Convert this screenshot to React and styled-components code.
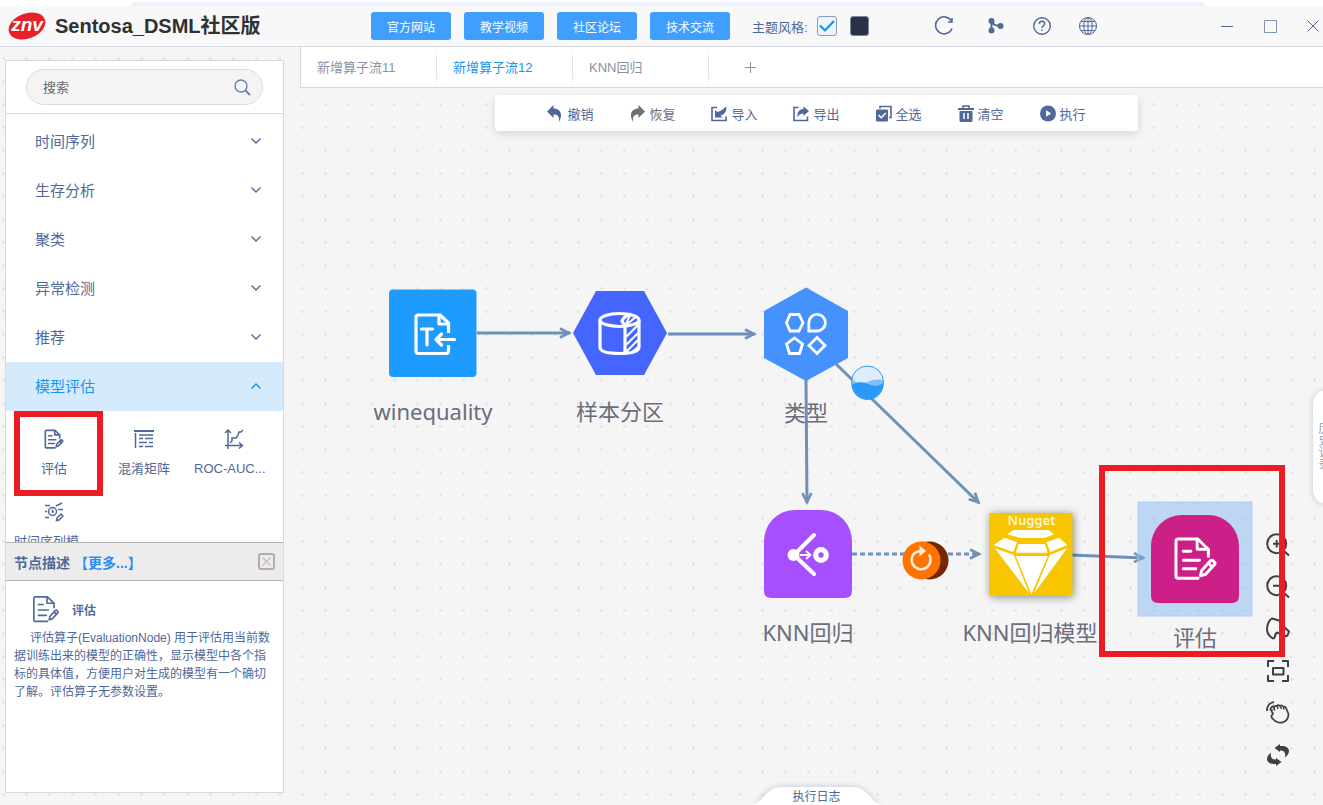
import React, { useState } from 'react';
import styled, { createGlobalStyle, css } from 'styled-components';

const colors = {
  primary: '#409eff',
  active: '#1296f5',
  ink: '#4f6899',
  muted: '#8a91a5',
  line: '#d6d9e4',
  canvas: '#f5f5f5',
  edge: '#6f90b8',
  danger: '#ed1c24',
};

const categories = ['时间序列', '生存分析', '聚类', '异常检测', '推荐', '模型评估'];

const flows = ['新增算子流11', '新增算子流12', 'KNN回归'];

const links = ['官方网站', '教学视频', '社区论坛', '技术交流'];

/* ---------- icons ---------- */

const EvaluateIcon = ({ weight = 8, ...rest }) => (
  <svg
    viewBox="640 258 136 136"
    fill="none"
    stroke="currentColor"
    strokeWidth={weight}
    strokeLinejoin="round"
    strokeLinecap="round"
    {...rest}
  >
    <path d="M747 320V299L715 267H656Q649 267 649 274V379Q649 386 656 386H716" />
    <path d="M713 268V298H746" />
    <path d="M671 304H694M671 331H720M671 357H709" />
    <path d="M723 378L727 362L753 333Q758 330 762 334L765 337Q769 341 765 345L738 374Z" />
    <path d="M748 341L758 351" />
  </svg>
);

const MatrixIcon = (props) => (
  <svg viewBox="0 0 20 18" fill="none" stroke="currentColor" strokeWidth="1.5" {...props}>
    <path d="M0 1H20" strokeWidth="2" />
    <path d="M1.5 3V18M5 5H19" />
    <path d="M5 8.5H9M11 8.5H19M5 12.5H13M15 12.5H19M5 16.5H9M11 16.5H19" />
  </svg>
);

const RocIcon = (props) => (
  <svg viewBox="0 0 20 20" fill="none" stroke="currentColor" strokeWidth="1.5" {...props}>
    <path d="M4 1V20M1 4L4 1L7 4M1 16.5H18M15 13.5L18.5 16.5L15 19.5" />
    <path d="M6 14L8 12V9H12L14 6L15 3H17L19 1" />
  </svg>
);

const SeriesIcon = (props) => (
  <svg viewBox="0 0 20 20" fill="none" stroke="currentColor" strokeWidth="1.5" {...props}>
    <circle cx="8.5" cy="9.5" r="4" />
    <path d="M8.5 7.5V10H10M1 3.5H6M1 9.5H3M1 15.5H5M12 4L18 1M14 7.5H19" />
    <path d="M12.5 18.5L13 16L17 12L19 14L15 18Z" />
  </svg>
);

const UndoIcon = (props) => (
  <svg viewBox="0 0 16 17" fill="currentColor" {...props}>
    <path d="M0 6.5L6.5 0V3.5C13 3.5 16.500 9 12 17C12.500 11.500 11 9.500 6.500 9.500V13Z" />
  </svg>
);

const RedoIcon = (props) => (
  <svg viewBox="0 0 16 17" fill="currentColor" {...props}>
    <path d="M16 6.500L9.500 0V3.500C3 3.500 -.500 9 4 17C3.500 11.500 5 9.500 9.500 9.500V13Z" />
  </svg>
);

const ImportIcon = (props) => (
  <svg viewBox="0 0 16 16" {...props}>
    <path d="M6 2H1V15H15V11" fill="none" stroke="currentColor" strokeWidth="1.6" />
    <path d="M4 12V4.500L6.200 6.500C10 6 12 3.500 15.500 1C15.500 6 13.500 9 9.500 10L11.500 12Z" fill="currentColor" />
  </svg>
);

const ExportIcon = (props) => (
  <svg viewBox="0 0 16 16" {...props}>
    <path d="M5.500 2H1V15H14.500V11" fill="none" stroke="currentColor" strokeWidth="1.600" />
    <path d="M16 5.500L10.500 1V3.500C6 3.500 4 7 4.500 12C6 9 7.500 8 10.500 8V10.500Z" fill="currentColor" />
  </svg>
);

const SelectAllIcon = (props) => (
  <svg viewBox="0 0 16 16" {...props}>
    <path d="M4 3V1H15V12H13" fill="none" stroke="currentColor" strokeWidth="1.600" />
    <rect x="0" y="4" width="12" height="12" rx="1" fill="currentColor" />
    <path d="M2.500 9.500L5.200 12.200L9.800 7.500" fill="none" stroke="#fff" strokeWidth="1.600" />
  </svg>
);

const TrashIcon = (props) => (
  <svg viewBox="0 0 16 17" {...props}>
    <path d="M5 3V1H11V3" fill="none" stroke="currentColor" strokeWidth="1.500" />
    <path d="M0 3H16V5H0ZM1.500 6H14.500V15.500Q14.500 17 13 17H3Q1.500 17 1.500 15.500Z" fill="currentColor" />
    <path d="M6 8V14M10 8V14" stroke="#fff" strokeWidth="1.500" />
  </svg>
);

const RunIcon = (props) => (
  <svg viewBox="0 0 17 17" {...props}>
    <circle cx="8.500" cy="8.500" r="8.500" fill="currentColor" />
    <path d="M6.500 5L12 8.500L6.500 12Z" fill="#fff" />
  </svg>
);

const actions = [
  { name: '撤销', Icon: UndoIcon },
  { name: '恢复', Icon: RedoIcon, disabled: true },
  { name: '导入', Icon: ImportIcon },
  { name: '导出', Icon: ExportIcon },
  { name: '全选', Icon: SelectAllIcon },
  { name: '清空', Icon: TrashIcon },
  { name: '执行', Icon: RunIcon },
];

const operators = [
  { name: '评估', Icon: EvaluateIcon, weight: 11 },
  { name: '混淆矩阵', Icon: MatrixIcon },
  { name: 'ROC-AUC...', Icon: RocIcon, long: true },
  { name: '时间序列模...', Icon: SeriesIcon, long: true },
];

const RefreshIcon = () => (
  <svg width="20" height="20" viewBox="0 0 20 20" fill="none" stroke="currentColor" strokeWidth="1.500">
    <path d="M17.500 5.200A8.500 8.500 0 1 0 18 12.500" />
    <path d="M14 6H18V2" />
  </svg>
);

const BranchIcon = () => (
  <svg width="18" height="18" viewBox="0 0 18 18" fill="currentColor">
    <path d="M4.500 4V14M4.500 4Q6 9 14 9" fill="none" stroke="currentColor" strokeWidth="2" />
    <circle cx="4.500" cy="4" r="3" />
    <circle cx="4.500" cy="13.500" r="3" />
    <circle cx="13.500" cy="9" r="3" />
  </svg>
);

const HelpIcon = () => (
  <svg width="20" height="20" viewBox="0 0 20 20" fill="none" stroke="currentColor" strokeWidth="1.400">
    <circle cx="10" cy="10" r="8.300" />
    <path d="M7.300 8Q7.300 5.300 10 5.300Q12.700 5.300 12.700 7.700Q12.700 9 11.200 9.800Q10 10.500 10 12" />
    <path d="M10 13.500V15" />
  </svg>
);

const GlobeIcon = () => (
  <svg width="20" height="20" viewBox="0 0 20 20" fill="none" stroke="currentColor" strokeWidth="1">
    <circle cx="10" cy="10" r="8.500" />
    <ellipse cx="10" cy="10" rx="4.200" ry="8.500" />
    <path d="M10 1.500V18.500M1.500 10H18.500M3 5.500H17M3 14.500H17" />
  </svg>
);

const canvasTools = [
  {
    name: '放大',
    draw: <path d="M20.200 10.700A9.500 9.500 0 1 1 1.200 10.700A9.500 9.500 0 1 1 20.200 10.700ZM17.500 17.500L23 22.500M10.700 7V14.500M7 10.700H14.500" />,
  },
  {
    name: '缩小',
    draw: <path d="M20.200 10.700A9.500 9.500 0 1 1 1.200 10.700A9.500 9.500 0 1 1 20.200 10.700ZM17.500 17.500L23 22.500M7 10.700H14.500" />,
  },
  {
    name: '指针',
    draw: <path d="M6 1.500L13 3.500Q15.500 4.500 16.500 6.500L18 10L23 14.500L21.500 18.500Q17 20.500 14 17L11.500 15.500Q9 16.500 9 19.500Q8.500 21.500 7 21.500Q1 18 1 12Q1.500 4 6 1.500Z" />,
  },
  {
    name: '适应画布',
    draw: <path d="M2 8V2H8M16 2H22V8M22 16V22H16M8 22H2V16M7 9H17.500V15.500H7Z" />,
  },
  {
    name: '拖动',
    draw: (
      <>
        <path d="M1 10Q1 2 8 1.200M4.500 9.500Q4 5.500 8 5.500" strokeWidth="1.800" />
        <path d="M6.500 8.500Q4.500 10 7 12.500L6 14Q4.500 16 7 18Q11 22.500 16.500 21.500Q22.500 19.500 22.500 13L20 7Q19 5 17.500 6Q16 3.500 14 5Q12 3.500 11 5Q7.500 4 8 8" strokeWidth="1.800" />
        <path d="M8 8L9 9.500M11 5.500L12 8M14.500 5.500L15.500 8M17.500 6.500L18 8.500" strokeWidth="1.500" />
      </>
    ),
  },
  {
    name: '旋转',
    draw: (
      <>
        <path d="M14 1L8.500 5L14 9V7.500C18 7 20 9.500 19 14.500C26 9 23.500 2 14 3Z" fill="currentColor" stroke="none" />
        <path d="M10 23L15.500 19L10 15V16.500C6 17 4 14.500 5 9.500C-2 15 .500 22 10 21Z" fill="currentColor" stroke="none" />
      </>
    ),
  },
];

/* ---------- flow nodes, drawn around their own centre ---------- */

const archPath = 'M-44 37V-13A31 31 0 0 1 -13 -44H13A31 31 0 0 1 44 -13V37Q44 44 37 44H-37Q-44 44 -44 37Z';

const DataShape = () => (
  <>
    <rect x="-43.500" y="-43.500" width="87.500" height="87.500" rx="4" fill="#1e9bff" />
    <g fill="none" stroke="#fff" strokeWidth="3.200" strokeLinejoin="round">
      <path d="M16 0V-10L7.500 -18H-14Q-16.500 -18 -16.500 -16V18Q-16.500 20.500 -14 20.500H13.500Q16 20.500 16 18V12" />
      <path d="M6.500 -17V-9H15" />
      <path d="M-11 -4H0M-5.500 -4V12M4 6.500H22M9 1L3.500 6.500L9 12" strokeLinecap="round" />
    </g>
  </>
);

const SampleShape = () => (
  <>
    <path d="M-47 0L-24 -42H24L47 0L24 42H-24Z" fill="#4466ff" />
    <g fill="none" stroke="#fff" strokeWidth="3.200">
      <ellipse cx="-.500" cy="-13" rx="19.500" ry="6.500" />
      <path d="M-20 -13V14Q-20 20.500 -.500 20.500Q19 20.500 19 14V-13" />
      <path d="M5 20V-7L2 -12Q4 -17 11 -19" />
      <path d="M6 -8L17 -17M6 -9L10 -18M6 4L18 -8M6 12L18 0M6 19L18 7M12 19L18 14" strokeWidth="2" />
    </g>
  </>
);

const TypeShape = () => (
  <>
    <path d="M0 -46.500L42 -23V24L0 47L-42 24V-23Z" fill="#4592ff" />
    <g fill="none" stroke="#fff" strokeWidth="2.800">
      <path d="M-16 -19.500H-7L-3 -11.300L-7 -3H-16L-19.500 -11.300Z" />
      <path d="M2.800 -3V-11A8.300 8.300 0 1 1 11 -3Z" />
      <path d="M-11.500 4L-3.500 10L-6.500 19.500H-16.500L-19.500 10Z" />
      <path d="M11 3.500L19 11.500L11 19.500L3 11.500Z" />
    </g>
  </>
);

const KnnShape = () => (
  <>
    <path d={archPath} fill="#a64fff" />
    <g fill="none" stroke="#fff">
      <circle cx="-14.500" cy="1" r="6" fill="#fff" stroke="none" />
      <path d="M-13 0L6 -19M-13 2L6 20" strokeWidth="4" strokeLinecap="round" />
      <circle cx="13" cy="1" r="5.300" strokeWidth="5.200" />
      <path d="M-8 1H2M-2 -3L2.500 1L-2 5" strokeWidth="1.800" />
    </g>
  </>
);

const NuggetShape = () => (
  <>
    <rect x="-41" y="-41" width="83" height="83" fill="#f8c600" />
    <text x="1" y="-29" textAnchor="middle" fontSize="13" fontWeight="600" fill="#fff6d2">
      Nugget
    </text>
    <path
      transform="translate(-70 -104) scale(.3333)"
      fill="#fff"
      d="M160 240H265L281 253L253 264H180L140 253ZM132 263L170 277L158 306L99 285ZM175 282H253L262 308H166ZM296 263L258 277L270 306L320 285ZM103 295L160 315L206 430ZM166 318H262L213 433ZM320 295L268 315L221 430Z"
    />
  </>
);

const EvaluateShape = () => (
  <>
    <rect x="-57" y="-57" width="114" height="114" fill="#7ab2ef" fillOpacity=".45" stroke="#a9cbfb" />
    <path d={archPath} fill="#cd1f88" />
    <g color="#fff">
      <EvaluateIcon x="-22" y="-23" width="45" height="45" weight="9" />
    </g>
  </>
);

const nodes = [
  { name: 'winequality', x: 133, y: 245, Shape: DataShape },
  { name: '样本分区', x: 320, y: 245, Shape: SampleShape },
  { name: '类型', x: 506, y: 246, Shape: TypeShape },
  { name: 'KNN回归', x: 508, y: 466, Shape: KnnShape },
  { name: 'KNN回归模型', x: 730, y: 466, Shape: NuggetShape, shadow: true },
  { name: '评估', x: 895, y: 471, Shape: EvaluateShape },
];

const edges = [
  { from: [177, 245], to: [270, 245] },
  { from: [368, 246], to: [455, 246] },
  { from: [506, 292], to: [507, 415] },
  { from: [536, 276], to: [679, 415] },
  { from: [552, 466], to: [680, 466], dashed: true },
  { from: [771, 467], to: [844, 470] },
];

const Edges = () => (
  <EdgeLayer aria-hidden="true">
    <defs>
      <marker id="arrow" viewBox="-13 -7 15 14" markerWidth="15" markerHeight="14" markerUnits="userSpaceOnUse" refX="0" refY="0" orient="auto">
        <path d="M-10 -4.500L-1 0L-10 4.500" fill="none" stroke={colors.edge} strokeWidth="2.600" />
      </marker>
    </defs>
    {edges.map(({ from, to, dashed }) => (
      <path
        key={from.join()}
        d={`M${from.join(' ')}L${to.join(' ')}`}
        stroke={colors.edge}
        strokeWidth="3"
        strokeDasharray={dashed ? '5 3' : undefined}
        markerEnd="url(#arrow)"
      />
    ))}
  </EdgeLayer>
);

const ProgressBadge = () => (
  <Badge $x={550} $y={277} width="35" height="35" viewBox="0 0 35 35" aria-label="进度">
    <circle cx="17.500" cy="17" r="16" fill="#d9ebfa" fillOpacity=".85" />
    <path d="M1.500 15Q8 19 17 17Q27 13 33.500 15.500L33 21A16 16 0 0 1 2 21Z" fill="#7fc2fa" />
    <path d="M1.500 20Q9 15 17.500 19Q27 23 33.500 18A16 16 0 0 1 1.500 20Z" fill="#2196f8" fillOpacity=".9" />
    <circle cx="17.500" cy="17" r="16" fill="none" stroke="#2a9df8" />
  </Badge>
);

const RetryBadge = () => (
  <Badge $x={602} $y={453} width="47" height="40" viewBox="0 0 47 40" aria-label="重新训练">
    <circle cx="27.500" cy="19.500" r="19" fill="#722700" />
    <circle cx="19.500" cy="19.500" r="19" fill="#ff7300" />
    <path d="M27 13.500A9.500 9.500 0 1 1 12 12.500Q15 10 19 10" fill="none" stroke="#ffeede" strokeWidth="2.600" />
    <path d="M17.500 4.500L24 10L17.500 15.500Z" fill="#ffeede" />
  </Badge>
);

const Chevron = ({ up }) => (
  <svg width="10" height="6" viewBox="0 0 10 6" fill="none" stroke="currentColor" strokeWidth="1.300">
    <path d={up ? 'M.500 5.500L5 1L9.500 5.500' : 'M.500 .500L5 5L9.500 .500'} />
  </svg>
);

const TopBar = () => (
  <Header>
    <Brand>
      <svg width="38" height="30" viewBox="0 0 38 30" aria-label="znv">
        <ellipse cx="19" cy="15" rx="19" ry="12.500" transform="rotate(-20 19 15)" fill="#e8202a" />
        <text x="19" y="20" textAnchor="middle" fontSize="19" fontWeight="700" fontStyle="italic" fill="#fff">
          znv
        </text>
      </svg>
      <h1>Sentosa_DSML社区版</h1>
    </Brand>
    <LinkGroup>
      {links.map((name) => (
        <LinkButton key={name}>{name}</LinkButton>
      ))}
    </LinkGroup>
    <ThemeGroup>
      <label htmlFor="light-theme">主题风格:</label>
      <Tick>
        <input id="light-theme" type="checkbox" defaultChecked />
        <svg width="16" height="14" viewBox="0 0 16 14" fill="none" stroke="#1296f5" strokeWidth="2.200">
          <path d="M1 6.500L6 11.500L15 2" />
        </svg>
      </Tick>
      <DarkSwatch aria-label="深色主题" />
    </ThemeGroup>
    <IconButton aria-label="刷新"><RefreshIcon /></IconButton>
    <IconGroup>
      <IconButton aria-label="分支"><BranchIcon /></IconButton>
      <IconButton aria-label="帮助"><HelpIcon /></IconButton>
      <IconButton aria-label="语言"><GlobeIcon /></IconButton>
    </IconGroup>
    <WindowControls>
      <IconButton aria-label="最小化">
        <svg width="12" height="12" viewBox="0 0 12 12" stroke="currentColor"><path d="M0 6.500H12" /></svg>
      </IconButton>
      <IconButton aria-label="最大化">
        <svg width="13" height="13" viewBox="0 0 13 13" fill="none" stroke="#7f93b8"><path d="M.500 .500H12.500V12.500H.500Z" /></svg>
      </IconButton>
      <IconButton aria-label="关闭">
        <svg width="12" height="12" viewBox="0 0 12 12" stroke="currentColor"><path d="M.500 .500L11.500 11.500M11.500 .500L.500 11.500" /></svg>
      </IconButton>
    </WindowControls>
  </Header>
);

const Sidebar = () => {
  const [opened, setOpened] = useState('模型评估');

  return (
    <SidePanel>
      <SearchRow>
        <SearchBox>
          <input type="search" aria-label="搜索" placeholder="搜索" />
          <svg width="17" height="17" viewBox="0 0 17 17" fill="none" stroke="#6a7fb0" strokeWidth="1.400">
            <circle cx="7" cy="7" r="6" />
            <path d="M11.500 11.500L16 16" strokeWidth="1.800" />
          </svg>
        </SearchBox>
      </SearchRow>
      <Menu>
        {categories.map((name) => (
          <Category key={name} $active={name === opened} onClick={() => setOpened(name)}>
            {name}
            <Chevron up={name === opened} />
          </Category>
        ))}
        <OperatorGrid>
          {operators.map(({ name, Icon, weight, long }) => (
            <Operator key={name} $long={long}>
              <Icon width="20" height="20" {...(weight && { weight })} />
              <span>{name}</span>
            </Operator>
          ))}
          <OperatorMark />
        </OperatorGrid>
      </Menu>
      <Description>
        <DescriptionHead>
          <h2>节点描述</h2>
          <a href="#more">【更多...】</a>
          <CloseButton aria-label="关闭描述">
            <svg width="9" height="9" viewBox="0 0 9 9" stroke="#cdbcb8" strokeWidth="1.400">
              <path d="M.500 .500L8.500 8.500M8.500 .500L.500 8.500" />
            </svg>
          </CloseButton>
        </DescriptionHead>
        <DescriptionTitle>
          <EvaluateIcon width="28" height="28" />
          评估
        </DescriptionTitle>
        <DescriptionText>
          评估算子(EvaluationNode) 用于评估用当前数据训练出来的模型的正确性，显示模型中各个指标的具体值，方便用户对生成的模型有一个确切了解。评估算子无参数设置。
        </DescriptionText>
      </Description>
    </SidePanel>
  );
};

const Canvas = () => (
  <CanvasArea>
    <Toolbar>
      {actions.map(({ name, Icon, disabled }) => (
        <Action key={name} disabled={disabled}>
          <Icon width="16" height="17" />
          {name}
        </Action>
      ))}
    </Toolbar>
    <Edges />
    {nodes.map(({ name, x, y, Shape, shadow }) => (
      <Node key={name} $x={x} $y={y} $shadow={shadow}>
        <svg width="96" height="96" viewBox="-48 -48 96 96">
          <Shape />
        </svg>
        {name}
      </Node>
    ))}
    <ProgressBadge />
    <RetryBadge />
    <CanvasTools>
      {canvasTools.map(({ name, draw }) => (
        <CanvasTool key={name} aria-label={name}>
          <svg width="24" height="24" viewBox="0 0 24 24" fill="none" stroke="currentColor" strokeWidth="2" strokeLinejoin="round">
            {draw}
          </svg>
        </CanvasTool>
      ))}
    </CanvasTools>
    <NodeMark />
    <HistoryTab>历史记录</HistoryTab>
    <LogTab>
      <svg width="128" height="19" viewBox="0 0 128 19" aria-hidden="true">
        <path d="M0 19Q6 17 11 10Q19 1 28 1H100Q109 1 117 10Q122 17 128 19Z" fill="#fff" />
      </svg>
      <span>执行日志</span>
    </LogTab>
  </CanvasArea>
);

const App = () => {
  const [current, setCurrent] = useState('新增算子流12');

  return (
    <Page>
      <GlobalStyle />
      <TopStrip><div /></TopStrip>
      <TopBar />
      <Main>
        <Sidebar />
        <Workspace>
          <Tabs>
            {flows.map((name) => (
              <Tab key={name} $active={name === current} onClick={() => setCurrent(name)}>
                {name}
              </Tab>
            ))}
            <AddTab aria-label="新增">
              <svg width="11" height="11" viewBox="0 0 11 11" stroke="currentColor"><path d="M0 5.500H11M5.500 0V11" /></svg>
            </AddTab>
          </Tabs>
          <Canvas />
        </Workspace>
      </Main>
    </Page>
  );
};

export default App;

const GlobalStyle = createGlobalStyle`
  * {
    box-sizing: border-box;
  }

  body {
    margin: 0;
    color: ${colors.ink};
    font-family: 'Liberation Sans', 'Noto Sans CJK SC', sans-serif;
    font-size: 13px;
  }

  button, input {
    padding: 0;
    border: none;
    background: none;
    color: inherit;
    font: inherit;
  }

  button {
    cursor: pointer;
  }

  h1, h2, p {
    margin: 0;
  }

  svg {
    flex: none;
  }
`;

const Page = styled.div`
  display: flex;
  flex-direction: column;
  height: 100vh;
  overflow: hidden;
  background: radial-gradient(circle, #e5e5e5 1px, transparent 2px) -8px 1px / 23px 23px ${colors.canvas};
`;

const TopStrip = styled.div`
  flex: none;
  height: 6px;
  padding: 2px 9% 0 10%;
  background: #fff;

  div {
    height: 4px;
    border-radius: 6px 6px 0 0;
    background: #edf1fb;
  }
`;

const Header = styled.header`
  display: flex;
  flex: none;
  align-items: center;
  height: 41px;
  padding: 0 0 0 8px;
  border-bottom: 1px solid ${colors.line};
  background: #f8f8f8;
`;

const Brand = styled.div`
  display: flex;
  align-items: center;
  gap: 9px;
  width: 363px;
  color: #303133;

  h1 {
    font-size: 20px;
    line-height: 30px;
    white-space: nowrap;
  }
`;

const LinkGroup = styled.nav`
  display: flex;
  gap: 13px;
`;

const LinkButton = styled.button`
  width: 80px;
  height: 28px;
  border-radius: 3px;
  background: ${colors.primary};
  color: #fff;
  font-size: 12px;
`;

const ThemeGroup = styled.div`
  display: flex;
  align-items: center;
  margin: 0 65px 0 22px;

  label {
    margin-right: 9px;
  }
`;

const Tick = styled.span`
  display: grid;
  place-items: center;
  margin-right: 13px;

  > * {
    grid-area: 1 / 1;
  }

  input {
    width: 20px;
    height: 20px;
    margin: 0;
    border: 1px solid #8b9bc0;
    border-radius: 3px;
    background: #eef4fd;
    appearance: none;
  }

  svg {
    pointer-events: none;
  }
`;

const DarkSwatch = styled.button`
  width: 19px;
  height: 20px;
  border: 1px solid #7d879d;
  border-radius: 3px;
  background: #283145;
`;

const IconButton = styled.button`
  display: grid;
  place-items: center;
  width: 20px;
  height: 24px;
`;

const IconGroup = styled.div`
  display: flex;
  gap: 26px;
  margin-left: 32px;
`;

const WindowControls = styled.div`
  display: flex;
  gap: 23px;
  margin-left: auto;
`;

const Main = styled.div`
  display: flex;
  flex: 1;
  gap: 16px;
  min-height: 0;
  padding-left: 5px;
`;

const SidePanel = styled.aside`
  display: flex;
  flex: none;
  flex-direction: column;
  width: 279px;
  margin: 13px 0 12px;
  border: 1px solid ${colors.line};
  background: #fff;
`;

const SearchRow = styled.div`
  flex: none;
  padding: 8px 20px;
  border-bottom: 1px solid ${colors.line};
`;

const SearchBox = styled.div`
  display: flex;
  align-items: center;
  height: 36px;
  padding: 0 11px 0 16px;
  border: 1px solid #d9dbe5;
  border-radius: 18px;
  background: #f4f4f4;

  input {
    flex: 1;
    min-width: 0;
    outline: none;
  }

  input::placeholder {
    color: #666b75;
    opacity: 1;
  }
`;

const Menu = styled.nav`
  flex: 1;
  min-height: 0;
  padding-top: 3px;
  overflow: hidden;
`;

const Category = styled.button`
  display: flex;
  align-items: center;
  justify-content: space-between;
  width: 100%;
  height: 49px;
  padding: 0 22px 2px 29px;
  font-size: 15px;

  ${(props) =>
    props.$active &&
    css`
      background: #d6eafe;
      color: ${colors.active};
    `}
`;

const OperatorGrid = styled.div`
  position: relative;
  display: grid;
  grid-template-columns: repeat(3, 80px);
  gap: 10px;
  padding: 18px 8px 0;
`;

const Operator = styled.button`
  display: flex;
  flex-direction: column;
  align-items: center;
  gap: 10px;
  height: 63px;
  line-height: 20px;

  span {
    align-self: ${(props) => (props.$long ? 'flex-start' : 'center')};
    white-space: nowrap;
  }
`;

const Mark = styled.div`
  position: absolute;
  border: 6px solid ${colors.danger};
  pointer-events: none;
`;

const OperatorMark = styled(Mark)`
  top: 0;
  left: 8px;
  width: 89px;
  height: 85px;
`;

const Description = styled.section`
  flex: none;
  height: 250px;
  overflow: hidden;
`;

const DescriptionHead = styled.div`
  display: flex;
  align-items: center;
  height: 39px;
  padding: 0 8px;
  border: solid #b3b3b3;
  border-width: 1px 0;
  background: #ececec;
  font-size: 14px;
  font-weight: 700;

  h2 {
    margin-right: 4px;
    font-size: 14px;
  }

  a {
    color: #2a8cf5;
    text-decoration: none;
  }
`;

const CloseButton = styled.button`
  display: grid;
  place-items: center;
  width: 17px;
  height: 17px;
  margin-left: auto;
  border: 2px solid #b3adad;
  border-radius: 3px;
`;

const DescriptionTitle = styled.div`
  display: flex;
  align-items: center;
  gap: 12px;
  padding: 14px 26px 6px;
  font-size: 12px;
  font-weight: 700;
`;

const DescriptionText = styled.p`
  padding: 0 8px;
  font-size: 12px;
  line-height: 18px;
  text-indent: 16px;
`;

const Workspace = styled.main`
  display: flex;
  flex: 1;
  flex-direction: column;
  min-width: 0;
`;

const Tabs = styled.div`
  display: flex;
  flex: none;
  height: 41px;
  border: solid ${colors.line};
  border-width: 0 0 1px 1px;
  background: #fff;
`;

const Tab = styled.button`
  width: 136px;
  padding: 0 16px 2px;
  border-right: 1px solid;
  border-image: linear-gradient(#fff, ${colors.line}, #fff) 1;
  color: ${(props) => (props.$active ? colors.active : colors.muted)};
  text-align: left;
`;

const AddTab = styled.button`
  display: grid;
  place-items: center;
  width: 82px;
  color: ${colors.muted};
`;

const CanvasArea = styled.div`
  position: relative;
  display: flex;
  flex: 1;
  flex-direction: column;
  align-items: center;
  justify-content: space-between;
  min-height: 0;
  padding: 7px 0 0 10px;
  overflow: hidden;
`;

const Toolbar = styled.div`
  display: flex;
  gap: 36px;
  height: 36px;
  padding: 0 52px;
  border-radius: 4px;
  background: #fff;
  box-shadow: 0 3px 10px rgba(0, 0, 0, 0.13);
`;

const Action = styled.button`
  display: flex;
  align-items: center;
  gap: 4px;
  color: ${(props) => (props.disabled ? '#6c6f7c' : colors.ink)};
`;

const EdgeLayer = styled.svg`
  position: absolute;
  inset: 0;
  width: 100%;
  height: 100%;
  pointer-events: none;
`;

const Node = styled.div`
  position: absolute;
  top: ${(props) => props.$y - 48}px;
  left: ${(props) => props.$x}px;
  display: flex;
  flex-direction: column;
  align-items: center;
  gap: 15px;
  transform: translateX(-50%);
  color: #6b6d7c;
  font-family: 'Noto Sans', 'Noto Sans CJK SC', sans-serif;
  font-size: 22px;
  line-height: 30px;
  white-space: nowrap;

  svg {
    overflow: visible;
    filter: ${(props) => (props.$shadow ? 'drop-shadow(1px 1px 4px rgba(0, 0, 0, 0.45))' : 'none')};
  }
`;

const Badge = styled.svg`
  position: absolute;
  top: ${(props) => props.$y}px;
  left: ${(props) => props.$x}px;
`;

const CanvasTools = styled.div`
  position: absolute;
  right: 33px;
  bottom: 38px;
  display: flex;
  flex-direction: column;
  gap: 18px;
`;

const CanvasTool = styled.button`
  display: block;
  width: 24px;
  height: 24px;
  color: #3f4043;
`;

const NodeMark = styled(Mark)`
  top: 377px;
  left: 799px;
  width: 186px;
  height: 192px;
`;

const HistoryTab = styled.button`
  position: absolute;
  top: 302px;
  right: -8px;
  width: 18px;
  height: 114px;
  padding-left: 5px;
  border-radius: 14px 0 0 14px;
  background: #fff;
  box-shadow: 0 0 6px rgba(110, 120, 170, 0.35);
  color: #8c9dca;
  font-size: 12px;
  line-height: 12px;
  word-break: break-all;
`;

const LogTab = styled.button`
  display: grid;
  place-items: end center;
  font-size: 12px;
  line-height: 16px;

  > * {
    grid-area: 1 / 1;
  }

  svg {
    filter: drop-shadow(0 0 3px rgba(110, 120, 180, 0.4));
  }

  span {
    z-index: 1;
  }
`;
